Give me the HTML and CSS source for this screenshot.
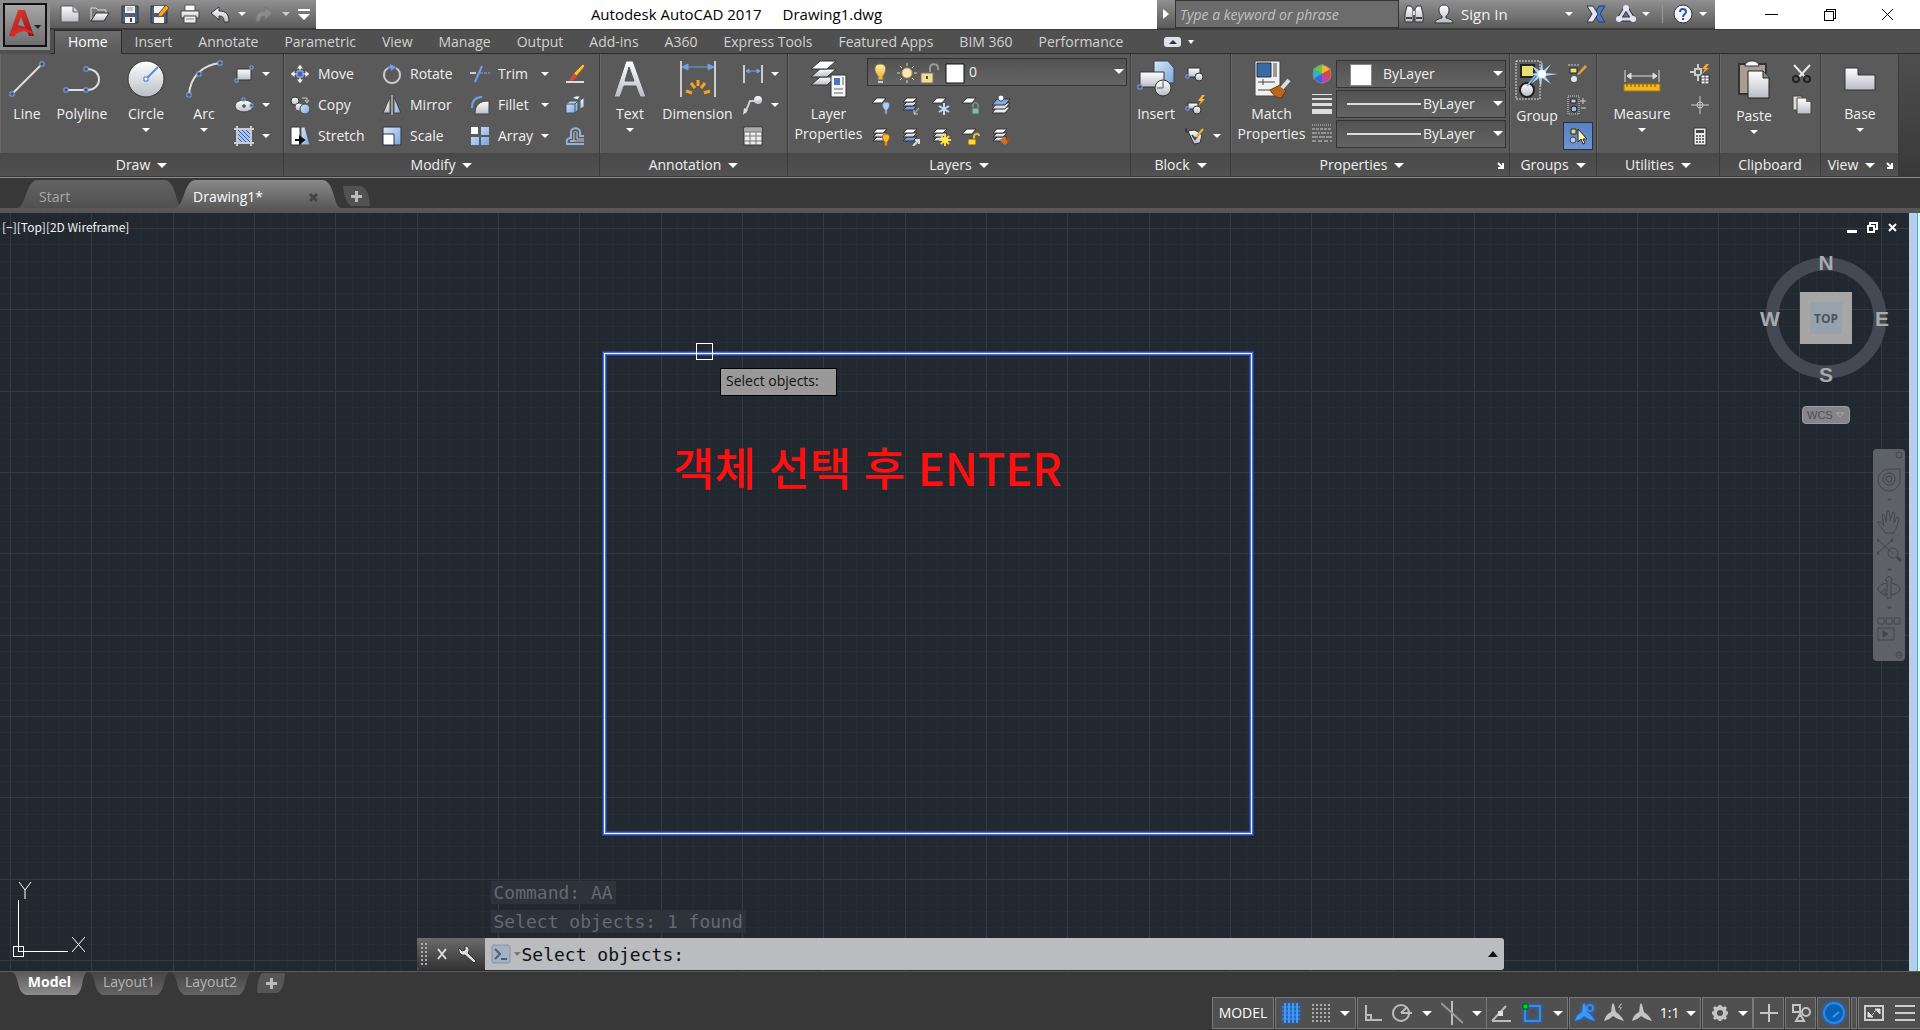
FILE: index.html
```html
<!DOCTYPE html>
<html lang="en">
<head>
<meta charset="utf-8">
<title>Autodesk AutoCAD 2017 - Drawing1.dwg</title>
<link rel="stylesheet" href="styles.css">
</head>
<body>
<svg class="defs" aria-hidden="true">
  <defs>
    <linearGradient id="gw" x1="0" y1="0" x2="0" y2="1"><stop offset="0" stop-color="#fff"/><stop offset="1" stop-color="#b9bdc6"/></linearGradient>
    <linearGradient id="gb" x1="0" y1="0" x2="1" y2="1"><stop offset="0" stop-color="#dbe9fb"/><stop offset="1" stop-color="#7aa3dc"/></linearGradient>
    <linearGradient id="gy" x1="0" y1="0" x2="0" y2="1"><stop offset="0" stop-color="#fff3a0"/><stop offset="1" stop-color="#e9a52c"/></linearGradient>
    <linearGradient id="gr" x1="0" y1="0" x2="1" y2="1"><stop offset="0" stop-color="#e8443c"/><stop offset="1" stop-color="#8e0d12"/></linearGradient>
    <symbol id="sheets" viewBox="0 0 20 20">
      <g stroke="#333" stroke-width="1"><path d="M6 11h10l-4 4H2z" fill="url(#gw)"/><path d="M6 7h10l-4 4H2z" fill="url(#gw)"/><path d="M6 3h10l-4 4H2z" fill="#fff"/></g>
    </symbol>
    <symbol id="sheetsblue" viewBox="0 0 20 20">
      <g stroke="#333" stroke-width="1"><path d="M6 11h10l-4 4H2z" fill="#6f9be8"/><path d="M6 7h10l-4 4H2z" fill="url(#gw)"/><path d="M6 3h10l-4 4H2z" fill="#fff"/></g>
    </symbol>
    <symbol id="sheet" viewBox="0 0 20 20"><path d="M6 3h9l-4 5H1z" fill="#fff" stroke="#333"/></symbol>
    <symbol id="person" viewBox="0 0 22 22"><path d="M10 1c2 2 2 7 3 9 3 2 6 5 8 9-4-1-8-3-11-5-2 2-5 4-9 5 1-4 3-7 7-9 1-2 0-7 2-9z" fill="currentColor"/></symbol>
  </defs>
</svg>

<header class="top">
  <button class="app" aria-label="Application menu"><svg width="34" height="34" viewBox="0 0 34 34"><path d="M10 1h7l9 26h-5l-2-5-9-3-3 8H1z" fill="url(#gr)"/><path d="M13 8l-3 8 7 2z" fill="#8c8c8c"/><path d="M2 24c7-6 14-7 23-1l-1 2c-8-5-14-3-19 3z" fill="#d92a27"/><path d="M26 16h7l-3 4z" fill="#222"/></svg></button>
  <div class="titlebar">
    <div class="qat">
      <button class="ib" aria-label="New"><svg viewBox="0 0 20 20"><path d="M1 2h12l6 6v10H1z" fill="url(#gw)" stroke="#555"/><path d="M13 2v6h6" fill="#ccc" stroke="#666"/></svg></button>
      <button class="ib" aria-label="Open"><svg viewBox="0 0 20 20"><path d="M1 16V4h5l2 2h8v3" fill="#777" stroke="#ddd"/><path d="M1 17l5-8h13l-5 8z" fill="url(#gw)" stroke="#333"/></svg></button>
      <button class="ib" aria-label="Save"><svg viewBox="0 0 20 20"><path d="M2 2h16v17H2z" fill="#4e5e76" stroke="#333"/><path d="M5 2h10v7H5zM5 13h10v6H5z" fill="#f2f2f2"/><path d="M7 4h6M7 6h6" stroke="#999"/><path d="M10 14h2v4h-2z" fill="#445"/></svg></button>
      <button class="ib" aria-label="Save as"><svg viewBox="0 0 20 20"><path d="M1 2h16v17H1z" fill="#4e5e76" stroke="#333"/><path d="M4 2h10v7H4zM4 13h10v6H4z" fill="#f2f2f2"/><path d="M8 13l1-4 7-8 3 3-7 8z" fill="#f3a72e" stroke="#8a4b12"/></svg></button>
      <button class="ib" aria-label="Plot"><svg viewBox="0 0 20 20"><path d="M5 1h10v6H5z" fill="#fff" stroke="#555"/><path d="M1 7h18v7H1z" fill="url(#gw)" stroke="#444"/><path d="M4 12h12v7H4z" fill="#eee" stroke="#444"/><path d="M6 15h8" stroke="#888"/></svg></button>
      <button class="ib" aria-label="Undo"><svg viewBox="0 0 20 20"><path d="M1 9l8-6v4c7 0 10 3 10 11h-5c0-4-1-6-5-6v4z" fill="url(#gw)" stroke="#333"/></svg></button>
      <span class="caret"></span>
      <button class="ib" aria-label="Redo"><svg viewBox="0 0 20 20"><path d="M18 9l-7-6v4c-7 0-9 3-9 10h4c0-4 1-5 5-5v4z" fill="#8b8b8b" stroke="#777"/></svg></button>
      <span class="caret dim"></span>
      <button class="ib slim" aria-label="Customize toolbar"><svg viewBox="0 0 12 20"><path d="M0 5h12v2H0zM0 10h12l-6 6z" fill="#fff"/></svg></button>
    </div>
    <h1 class="doc-title"><span>Autodesk AutoCAD 2017</span><span>Drawing1.dwg</span></h1>
    <div class="info">
      <button class="arrow" aria-label="Collapse search"><svg width="6" height="10" viewBox="0 0 6 10"><path d="M0 0l6 5-6 5z" fill="#fff"/></svg></button>
      <input class="search" type="text" aria-label="Search help" placeholder="Type a keyword or phrase">
      <button class="ib" aria-label="Search"><svg viewBox="0 0 20 20"><path d="M3 2h4l2 3v13H1v-8zM17 2h-4l-2 3v13h8v-8z" fill="url(#gw)" stroke="#333"/><path d="M9 7h2v4H9z" fill="#ddd"/><path d="M2 14h6M12 14h6" stroke="#444" stroke-width="2"/></svg></button>
      <button class="signin"><svg width="20" height="20" viewBox="0 0 20 20"><path d="M10 1c4 0 5 3 5 5 0 3-2 6-3 6v2c4 1 7 2 7 5H1c0-3 3-4 7-5v-2C7 12 5 9 5 6c0-2 1-5 5-5z" fill="url(#gw)" stroke="#333"/></svg><span>Sign In</span><span class="caret"></span></button>
      <button class="ib" aria-label="Exchange apps"><svg viewBox="0 0 20 20"><path d="M19 2h-6L8 10l5 8h6l-5-8z" fill="#4e74c9" stroke="#263a70"/><path d="M1 2h6l5 8-5 8H1l5-8z" fill="#dfe5f2" stroke="#333"/></svg></button>
      <button class="ib" aria-label="Stay connected"><svg viewBox="0 0 20 20"><path d="M10 4l7 11H3z" fill="none" stroke="#334" stroke-width="5" stroke-linejoin="round"/><path d="M10 4l7 11H3z" fill="none" stroke="#d5dbe8" stroke-width="3"/><g fill="#e4e9f3"><circle cx="10" cy="4" r="3"/><circle cx="3" cy="15" r="3"/><circle cx="17" cy="15" r="3"/></g></svg></button>
      <span class="caret"></span>
      <span class="vsep"></span>
      <button class="ib" aria-label="Help"><svg viewBox="0 0 20 20"><circle cx="10" cy="10" r="9" fill="#f4f4f4" stroke="#333"/><path d="M7 8c0-4 6-4 6 0 0 2-3 2-3 5M10 14v2" fill="none" stroke="#2555b5" stroke-width="2"/></svg></button>
      <span class="caret"></span>
    </div>
    <div class="win">
      <button aria-label="Minimize"><svg width="13" height="13" viewBox="0 0 13 13"><path d="M0 6h13v1H0z"/></svg></button>
      <button aria-label="Restore"><svg width="13" height="13" viewBox="0 0 13 13" fill="none" stroke="#000"><path d="M1 3h9v9H1zM3 3V1h9v9h-2" shape-rendering="crispEdges"/></svg></button>
      <button aria-label="Close"><svg width="13" height="13" viewBox="0 0 13 13" stroke="#000"><path d="M1 1l11 11M12 1L1 12"/></svg></button>
    </div>
  </div>
  <nav class="tabs">
    <a href="#" class="on">Home</a><a href="#">Insert</a><a href="#">Annotate</a><a href="#">Parametric</a><a href="#">View</a><a href="#">Manage</a><a href="#">Output</a><a href="#">Add-ins</a><a href="#">A360</a><a href="#">Express Tools</a><a href="#">Featured Apps</a><a href="#">BIM 360</a><a href="#">Performance</a>
    <button class="minrib" aria-label="Minimize ribbon"><svg width="30" height="10" viewBox="0 0 30 10"><rect width="17" height="10" rx="3" fill="#dfe2ea"/><path d="M5 7l4-4 4 4z" fill="#333"/><path d="M24 3h6l-3 4z" fill="#fff"/></svg></button>
  </nav>
</header>

<main class="ribbon">
  <section class="panel p-draw">
    <div class="body">
      <button class="big w54"><svg width="36" height="38" viewBox="0 0 36 38"><path d="M3 34L33 4" stroke="#ddd" stroke-width="2"/><g fill="#3b4f78" stroke="#7ea6e8"><path d="M1 32h4v4H1zM31 2h4v4h-4z"/></g></svg><span>Line</span></button>
      <button class="big w56"><svg width="38" height="38" viewBox="0 0 38 38"><path d="M3 30h21c16 0 16-21 0-21" fill="none" stroke="#ddd" stroke-width="2"/><g fill="#3b4f78" stroke="#7ea6e8"><path d="M1 28h4v4H1zM21 28h4v4h-4zM21 7h4v4h-4z"/></g></svg><span>Polyline</span></button>
      <button class="big w72"><svg width="38" height="38" viewBox="0 0 38 38"><circle cx="19" cy="19" r="18" fill="url(#gw)" stroke="#333"/><path d="M19 19L31 7" stroke="#5a8de0" stroke-width="2"/><path d="M17 17h4v4h-4z" fill="#fff" stroke="#3c6fd0"/></svg><span>Circle</span><i class="caret"></i></button>
      <button class="big w44"><svg width="38" height="38" viewBox="0 0 38 38"><path d="M4 35C5 17 17 5 35 3" fill="none" stroke="#ddd" stroke-width="2"/><g fill="#3b4f78" stroke="#7ea6e8"><path d="M2 33h4v4H2zM12 12h4v4h-4zM33 1h4v4h-4z"/></g></svg><span>Arc</span><i class="caret"></i></button>
      <div class="col pl8">
        <button class="tool" aria-label="Rectangle"><svg viewBox="0 0 20 20"><path d="M3 5h14v11H3z" fill="url(#gw)" stroke="#333"/><g fill="#3b4f78" stroke="#7ea6e8"><path d="M16 2h3v3h-3zM1 15h3v3H1z"/></g></svg><i class="caret"></i></button>
        <button class="tool" aria-label="Ellipse"><svg viewBox="0 0 20 20"><ellipse cx="10" cy="11" rx="9" ry="6" fill="url(#gw)" stroke="#444"/><path d="M10 9v4M8 11h4" stroke="#222"/><g fill="#3b4f78" stroke="#7ea6e8"><path d="M8 3h3v3H8zM16 9h3v3h-3z"/></g></svg><i class="caret"></i></button>
        <button class="tool" aria-label="Hatch"><svg viewBox="0 0 20 20"><path d="M4 4h12v12H4z" fill="#a9c2f0"/><path d="M4 8l8 8M4 12l4 4M4 4l12 12M8 4l8 8M12 4l4 4" stroke="#3a62b8" stroke-width="1"/><path d="M3 0v20M17 0v20M0 3h20M0 17h20" stroke="#ccc" stroke-width="2"/></svg><i class="caret"></i></button>
      </div>
    </div>
    <h2>Draw<i class="caret lg"></i></h2>
  </section>

  <section class="panel p-modify">
    <div class="body">
      <div class="col w92">
        <button class="tool"><svg viewBox="0 0 20 20"><path d="M10 0l4 5h-3v10h3l-4 5-4-5h3V5H6zM0 10l5-4v3h10V6l5 4-5 4v-3H5v3z" fill="#eee" stroke="#555" stroke-width="1"/><path d="M7 7h6v6H7z" fill="#3d66b8" stroke="#9bbcf0"/></svg>Move</button>
        <button class="tool"><svg viewBox="0 0 20 20"><circle cx="5" cy="6" r="4" fill="url(#gw)" stroke="#333"/><path d="M12 3h5v4M15 5l2 3 2-3" fill="none" stroke="#ccc"/><circle cx="9" cy="12" r="4" fill="url(#gw)" stroke="#555"/><circle cx="15" cy="14" r="5" fill="url(#gb)" stroke="#444"/></svg>Copy</button>
        <button class="tool"><svg viewBox="0 0 20 20"><path d="M1 1h9v18H1z" fill="#fff" stroke="#333"/><path d="M11 1h4l5 18h-9z" fill="url(#gb)" stroke="#555"/><path d="M5 14h8M10 11l4 3-4 3z" stroke="#111" stroke-width="2"/></svg>Stretch</button>
      </div>
      <div class="col w88">
        <button class="tool"><svg viewBox="0 0 20 20"><path d="M6 4a8 8 0 1 0 8 0" fill="none" stroke="#c9c9c9" stroke-width="2"/><path d="M6 4a8 8 0 0 1 6-1" fill="none" stroke="#6ea0ee" stroke-width="2"/><path d="M8 0l6 3-5 4z" fill="#6ea0ee"/></svg>Rotate</button>
        <button class="tool"><svg viewBox="0 0 20 20"><path d="M8 2v16H1z" fill="url(#gw)" stroke="#444"/><path d="M12 2v16h7z" fill="url(#gb)" stroke="#444"/><path d="M10 0v20" stroke="#ddd"/></svg>Mirror</button>
        <button class="tool"><svg viewBox="0 0 20 20"><path d="M1 1h18v18H1z" fill="url(#gb)" stroke="#334"/><path d="M1 8h11v11H1z" fill="#fff" stroke="#334"/></svg>Scale</button>
      </div>
      <div class="col w79">
        <button class="tool split"><svg viewBox="0 0 20 20"><path d="M0 9h6" stroke="#ccc" stroke-width="2"/><path d="M5 18l7-16" stroke="#6ea0ee" stroke-width="2"/><path d="M10 9h10" stroke="#7ea6e8" stroke-dasharray="3 1"/></svg>Trim<i class="caret"></i></button>
        <button class="tool split"><svg viewBox="0 0 20 20"><path d="M5 19C5 10 9 6 19 6v13z" fill="url(#gw)" stroke="#444"/><path d="M2 13C2 6 5 2 12 2" fill="none" stroke="#6ea0ee" stroke-width="2"/></svg>Fillet<i class="caret"></i></button>
        <button class="tool split"><svg viewBox="0 0 20 20"><path d="M1 1h7v7H1z" fill="#fff"/><path d="M11 1h8v8h-8zM1 11h8v8H1zM11 11h8v8h-8z" fill="url(#gb)"/></svg>Array<i class="caret"></i></button>
      </div>
      <div class="col pl16">
        <button class="tool" aria-label="Erase"><svg viewBox="0 0 20 20"><path d="M18 0l2 2-9 11-3-3z" fill="#f6bf45" stroke="#8a5a10"/><path d="M9 9l3 3-3 4c-2 1-4 1-5 0z" fill="#d4502a"/><path d="M1 18h18" stroke="#ddd" stroke-width="2"/></svg></button>
        <button class="tool" aria-label="Explode"><svg viewBox="0 0 20 20"><path d="M1 9l4-3h8v9l-3 3H1z" fill="url(#gb)" stroke="#456"/><path d="M1 9h9v9M10 9l3-3" fill="none" stroke="#456"/><path d="M7 3l4-2h4l-2 4zM15 5l4-2v9l-4 2z" fill="url(#gw)" stroke="#567"/></svg></button>
        <button class="tool" aria-label="Offset"><svg viewBox="0 0 20 20"><path d="M19 18H2c-1-4 0-6 4-6V6c0-5 9-5 9 0v4h4" fill="none" stroke="#8fb1ea" stroke-width="2"/><path d="M19 15H5h4V7c0-2 3-2 3 0v6h7" fill="none" stroke="#ccc"/></svg></button>
      </div>
    </div>
    <h2>Modify<i class="caret lg"></i></h2>
  </section>

  <section class="panel p-annotation">
    <div class="body">
      <button class="big w60"><svg width="34" height="38" viewBox="0 0 34 38"><path d="M13 1h7l13 36h-6l-4-11H11L7 37H1zM16 7l-4 14h9z" fill="url(#gw)" fill-rule="evenodd" stroke="#555"/></svg><span>Text</span><i class="caret"></i></button>
      <button class="big w75"><svg width="38" height="38" viewBox="0 0 38 38"><path d="M2 1v36M36 1v36" stroke="#ccc" stroke-width="2"/><path d="M4 7h30M9 4L3 7l6 3zM29 4l6 3-6 3z" fill="#6ea0ee" stroke="#6ea0ee"/><path d="M19 20v6M12 23l4 5M26 23l-4 5M7 31l6 2M31 31l-6 2" stroke="#f5a51d" stroke-width="3"/></svg><span>Dimension</span></button>
      <div class="col pl8">
        <button class="tool" aria-label="Linear dimension"><svg viewBox="0 0 20 20"><path d="M1 1v18M19 1v18" stroke="#ccc" stroke-width="2"/><path d="M3 7h14M6 5L3 7l3 2zM14 5l3 2-3 2z" fill="#6ea0ee" stroke="#6ea0ee"/></svg><i class="caret"></i></button>
        <button class="tool" aria-label="Leader"><svg viewBox="0 0 20 20"><path d="M2 18L7 6h6" fill="none" stroke="#ccc" stroke-width="2"/><path d="M0 20l1-7 4 2z" fill="#ddd"/><circle cx="15" cy="5" r="4" fill="url(#gw)"/></svg><i class="caret"></i></button>
        <button class="tool" aria-label="Table"><svg viewBox="0 0 20 20"><path d="M1 1h18v18H1z" fill="#eee" stroke="#333"/><path d="M1 2h18v4H1z" fill="#aaa"/><path d="M1 6h18M1 10h18M1 15h18M7 6v13M13 6v13" stroke="#777"/></svg></button>
      </div>
    </div>
    <h2>Annotation<i class="caret lg"></i></h2>
  </section>

  <section class="panel p-layers">
    <div class="body">
      <button class="big w81"><svg width="38" height="38" viewBox="0 0 38 38"><g stroke="#333"><path d="M10 17h16l-9 8H1z" fill="url(#gw)"/><path d="M10 9h16l-9 8H1z" fill="url(#gw)"/><path d="M10 1h16l-9 8H1z" fill="#fff"/><path d="M21 15h15v22H21z" fill="#f4f4f4"/></g><path d="M24 18h6v7h-6z" fill="#4a78bd"/><path d="M33 17v8M24 29h9M24 33h9" stroke="#666"/></svg><span>Layer<br>Properties</span></button>
      <div class="layergrid">
        <div class="combo layer">
          <svg width="98" height="22" viewBox="0 0 98 22" aria-hidden="true"><path d="M8 2c8 0 6 8 3 12v4H6v-4C2 10 1 2 8 2z" fill="url(#gy)" stroke="#775"/><path d="M6 19h5v2H6z" fill="#ccc"/><circle cx="35" cy="11" r="5" fill="#fbe7a8" stroke="#b99"/><path d="M35 1v3M35 18v3M25 11h3M42 11h3M28 4l2 2M42 4l-2 2M28 18l2-2M42 18l-2-2" stroke="#e9d9a0"/><path d="M58 10V6c0-5 8-5 8 0v2" fill="none" stroke="#999" stroke-width="2"/><path d="M49 11h12v10H49z" fill="#f3dd92" stroke="#776"/><path d="M55 14v3" stroke="#554" stroke-width="2"/><path d="M74 2h18v19H74z" fill="#fff" stroke="#111"/></svg>
          <select aria-label="Layer"><option>0</option></select>
        </div>
        <div class="icons">
          <button class="ib" aria-label="Layer off"><svg viewBox="0 0 20 20"><use href="#sheet"/><path d="M15 7c6 0 3 7 1 8v4h-2v-4c-2-1-5-8 1-8z" fill="#a9cdf5" stroke="#678"/></svg></button>
          <button class="ib" aria-label="Layer isolate"><svg viewBox="0 0 20 20"><use href="#sheetsblue"/><path d="M18 13l-5 6v-4M13 19h4" fill="none" stroke="#ccc" stroke-width="1"/></svg></button>
          <button class="ib" aria-label="Layer freeze"><svg viewBox="0 0 20 20"><use href="#sheet"/><path d="M13 8v12M8 11l10 6M8 17l10-6" stroke="#bcdcff" stroke-width="2"/></svg></button>
          <button class="ib" aria-label="Layer lock"><svg viewBox="0 0 20 20"><use href="#sheet"/><path d="M12 13v-3c0-3 5-3 5 0v3" fill="none" stroke="#9bb"/><path d="M11 13h7v6h-7z" fill="#8fb5aa" stroke="#465"/></svg></button>
          <button class="ib" aria-label="Make current"><svg viewBox="0 0 20 20"><path d="M6 12h13l-5 6H1z" fill="#eee" stroke="#333"/><path d="M6 8h13l-5 6H1z" fill="#ddd" stroke="#333"/><path d="M6 4h13l-5 6H1z" fill="#7daae8" stroke="#333"/><circle cx="10" cy="3" r="3" fill="#fff" stroke="#555"/></svg></button>
          <button class="ib" aria-label="Turn all layers on"><svg viewBox="0 0 20 20"><use href="#sheets"/><path d="M15 8c6 0 3 7 1 8v4h-2v-4c-2-1-5-8 1-8z" fill="#f9b637" stroke="#a60"/></svg></button>
          <button class="ib" aria-label="Layer unisolate"><svg viewBox="0 0 20 20"><use href="#sheetsblue"/><path d="M12 20l6-6M14 14h4v4" fill="none" stroke="#ddd" stroke-width="2"/></svg></button>
          <button class="ib" aria-label="Thaw all layers"><svg viewBox="0 0 20 20"><use href="#sheets"/><path d="M14 8v12M8 14h12M10 10l8 8M10 18l8-8" stroke="#ffd93b" stroke-width="2"/><circle cx="14" cy="14" r="3" fill="#ffe75c"/></svg></button>
          <button class="ib" aria-label="Unlock layer"><svg viewBox="0 0 20 20"><use href="#sheet"/><path d="M13 13v-2c0-4 5-4 5-1" fill="none" stroke="#e9c62c" stroke-width="2"/><path d="M7 13h8v6H7z" fill="#ffd93b" stroke="#653"/></svg></button>
          <button class="ib" aria-label="Match layer"><svg viewBox="0 0 20 20"><use href="#sheets"/><path d="M8 14l6-3 4 4-4 4z" fill="#c9702a"/><path d="M15 12l4 4M19 11l-3 4" stroke="#a54d14" stroke-width="2"/></svg></button>
        </div>
      </div>
    </div>
    <h2>Layers<i class="caret lg"></i></h2>
  </section>

  <section class="panel p-block">
    <div class="body">
      <button class="big w50"><svg width="38" height="38" viewBox="0 0 38 38"><path d="M17 1h14l6 7v15H17z" fill="url(#gb)" stroke="#345"/><path d="M3 12h24v15H3z" fill="url(#gw)" stroke="#333"/><circle cx="26" cy="28" r="8" fill="url(#gw)" stroke="#333"/><path d="M26 21v7h-6" fill="none" stroke="#555"/><path d="M1 25h4v4H1z" fill="#3b4f78" stroke="#7ea6e8"/></svg><span>Insert</span></button>
      <div class="col pl4">
        <button class="tool" aria-label="Create block"><svg viewBox="0 0 20 20"><path d="M3 4h12v9H3z" fill="url(#gw)" stroke="#333"/><circle cx="14" cy="13" r="4" fill="url(#gw)" stroke="#333"/><path d="M1 11h3v3H1z" fill="#3b4f78" stroke="#7ea6e8"/></svg></button>
        <button class="tool" aria-label="Block editor"><svg viewBox="0 0 20 20"><path d="M3 8h10v6H3z" fill="url(#gw)" stroke="#333"/><circle cx="12" cy="15" r="4" fill="url(#gw)" stroke="#333"/><path d="M1 12h3v3H1z" fill="#3b4f78" stroke="#7ea6e8"/><path d="M17 0l-4 6h3l-3 5 7-7h-3l3-4z" fill="#ffb52e"/></svg></button>
        <button class="tool" aria-label="Edit attributes"><svg viewBox="0 0 20 20"><path d="M1 2v4h3" fill="none" stroke="#222"/><path d="M3 5l7-1 7 5-2 8-6 1z" fill="url(#gw)" stroke="#333"/><path d="M7 9l3 4 7-9" fill="none" stroke="#444" stroke-width="2"/><path d="M11 11l7-8" stroke="#f1b53b" stroke-width="2"/></svg><i class="caret"></i></button>
      </div>
    </div>
    <h2>Block<i class="caret lg"></i></h2>
  </section>

  <section class="panel p-properties">
    <div class="body">
      <button class="big w81"><svg width="38" height="38" viewBox="0 0 38 38"><path d="M2 1h25v35H2z" fill="#f1f1f1" stroke="#444"/><path d="M4 3h14v14H4z" fill="#356ba6" stroke="#234"/><path d="M20 3h4v14h-4z" fill="#999"/><path d="M5 22h17M10 19v6M5 30h12" stroke="#444"/><path d="M17 30l10-5 6 6-5 7c-5 0-8-3-11-8z" fill="#b9671f" stroke="#6a3608"/><path d="M29 28l7-8" stroke="#ddd" stroke-width="4"/></svg><span>Match<br>Properties</span></button>
      <div class="props">
        <label for="pc"><svg width="20" height="20" viewBox="0 0 20 20"><path d="M10 10V0l9 5z" fill="#f3b231"/><path d="M10 10l9-5v10z" fill="#e6442f"/><path d="M10 10l9 5-9 5z" fill="#c23fb8"/><path d="M10 10v10l-9-5z" fill="#3e62e0"/><path d="M10 10L1 15V5z" fill="#29b6c8"/><path d="M10 10L1 5l9-5z" fill="#62c940"/><circle cx="10" cy="10" r="9" fill="none" stroke="#888"/></svg></label>
        <div class="combo color"><select id="pc" aria-label="Object color"><option>ByLayer</option></select></div>
        <label for="pw"><svg width="20" height="20" viewBox="0 0 20 20" fill="#ddd"><path d="M0 0h20v1H0zM0 4h20v2H0zM0 9h20v3H0zM0 15h20v5H0z"/></svg></label>
        <div class="combo lw"><select id="pw" aria-label="Lineweight"><option>ByLayer</option></select></div>
        <label for="pl"><svg width="20" height="20" viewBox="0 0 20 20" stroke="#ccc"><path d="M0 1h20" stroke-dasharray="1 1"/><path d="M0 5h20" stroke-dasharray="3 1"/><path d="M0 9h20" stroke-dasharray="5 1 2 1"/><path d="M0 13h20" stroke-dasharray="6 1"/><path d="M0 17h20" stroke-dasharray="4 2"/></svg></label>
        <div class="combo lt"><select id="pl" aria-label="Linetype"><option>ByLayer</option></select></div>
      </div>
    </div>
    <h2>Properties<i class="caret lg"></i><button class="launch" aria-label="Properties dialog"><svg width="7" height="7" viewBox="0 0 7 7"><path d="M1 1l4 4M6 1v5H1" fill="none" stroke="#fff" stroke-width="2"/></svg></button></h2>
  </section>

  <section class="panel p-groups">
    <div class="body">
      <button class="big w54"><svg width="44" height="40" viewBox="0 0 44 40"><path d="M1 1h24v38H1z" fill="none" stroke="#ddd" stroke-dasharray="2 1"/><path d="M6 5h13v12H6z" fill="#e8e06c" stroke="#222" stroke-width="2"/><circle cx="12" cy="30" r="7" fill="url(#gw)" stroke="#222" stroke-width="2"/><path d="M12 26l8-10" stroke="#7fb6ea" stroke-width="2"/><path d="M27 0l1 11 8-7-6 9 13 1-13 2 6 8-9-6-1 10-2-10-8 6 6-8-10-2 10-1-6-8 9 6z" fill="#a9d4fb"/><circle cx="27" cy="14" r="4" fill="#fff"/></svg><span>Group</span></button>
      <div class="col">
        <button class="tool" aria-label="Group edit"><svg viewBox="0 0 20 20"><path d="M1 1h12" stroke="#ccc" stroke-dasharray="2 1"/><path d="M3 4h7v5H3z" fill="#e8e06c" stroke="#222"/><circle cx="7" cy="15" r="3" fill="#dfe9f5"/><path d="M10 10l8-9 2 2-8 8z" fill="#d9a53a"/></svg></button>
        <button class="tool" aria-label="Ungroup"><svg viewBox="0 0 20 20"><path d="M1 1h11v18H1z" fill="none" stroke="#ccc" stroke-dasharray="1 1"/><path d="M4 4h5v4H4z" fill="#ccd" stroke="#223"/><circle cx="7" cy="14" r="3" fill="#9bc" stroke="#124"/><path d="M13 6h6M16 3v6M14 13h5" stroke="#ccc"/></svg></button>
        <button class="tool active" aria-label="Group selection"><svg viewBox="0 0 20 20"><path d="M3 3h5v5H3z" fill="#e8e06c" stroke="#223"/><circle cx="5" cy="14" r="3" fill="#bcd" stroke="#445"/><path d="M10 3v13l3-3 2 5 2-1-2-4h4z" fill="#fff7b0" stroke="#222"/></svg></button>
      </div>
    </div>
    <h2>Groups<i class="caret lg"></i></h2>
  </section>

  <section class="panel p-utilities">
    <div class="body">
      <button class="big w90"><svg width="38" height="38" viewBox="0 0 38 38"><path d="M2 10v12M36 10v12M4 16h30M8 13l-4 3 4 3zM30 13l4 3-4 3z" fill="#ddd" stroke="#ddd"/><path d="M1 24h36v7H1z" fill="#f1b722" stroke="#a77608"/><path d="M4 24v3M8 24v3M12 24v3M16 24v3M20 24v3M24 24v3M28 24v3M32 24v3" stroke="#7a5400"/></svg><span>Measure</span><i class="caret"></i></button>
      <div class="col">
        <button class="tool" aria-label="Quick select"><svg viewBox="0 0 20 20"><path d="M8 0v5M8 11v6M0 8h5M5 5h6v6H5z" fill="none" stroke="#ccc" stroke-width="2"/><path d="M16 0l-4 5h3l-3 5 7-6h-3l3-4z" fill="#ffa62b"/><path d="M11 11h8v9h-8z" fill="#fff" stroke="#333"/><path d="M11 14h8M11 17h8M15 11v9" stroke="#555"/></svg></button>
        <button class="tool" aria-label="Point style"><svg viewBox="0 0 20 20"><path d="M10 1v18M1 10h18" stroke="#ccc"/><circle cx="10" cy="10" r="3" fill="none" stroke="#ccc" stroke-width="1"/></svg></button>
        <button class="tool" aria-label="Calculator"><svg viewBox="0 0 20 20"><path d="M4 2h12v17H4z" fill="#eee" stroke="#333"/><path d="M6 4h8v3H6z" fill="#444"/><path d="M6 10h8M6 13h8M6 16h8" stroke="#666" stroke-width="2" stroke-dasharray="2 1"/></svg></button>
      </div>
    </div>
    <h2>Utilities<i class="caret lg"></i></h2>
  </section>

  <section class="panel p-clipboard">
    <div class="body">
      <button class="big w68"><svg width="34" height="40" viewBox="0 0 34 40"><path d="M2 4h27v30H2z" fill="#a99c90" stroke="#333" stroke-width="2"/><path d="M8 6c0-3 3-5 7-5s7 2 7 5z" fill="#fff" stroke="#333"/><path d="M11 11h15l6 7v20H11z" fill="url(#gw)" stroke="#222"/><path d="M26 11v7h6" fill="#888" stroke="#222"/></svg><span>Paste</span><i class="caret"></i></button>
      <div class="col pl4">
        <button class="tool" aria-label="Cut"><svg viewBox="0 0 20 20"><path d="M2 1l11 12M18 1L7 13" stroke="#e8e8e8" stroke-width="2"/><circle cx="4" cy="15" r="3" fill="none" stroke="#222" stroke-width="2"/><circle cx="15" cy="15" r="3" fill="none" stroke="#222" stroke-width="2"/></svg></button>
        <button class="tool" aria-label="Copy clip"><svg viewBox="0 0 20 20"><path d="M1 1h9v14H1z" fill="#ddd" stroke="#444"/><path d="M5 3h9l5 4v12H5z" fill="url(#gw)" stroke="#444"/><path d="M14 3v4h5" fill="#666"/></svg></button>
      </div>
    </div>
    <h2>Clipboard</h2>
  </section>

  <section class="panel p-view">
    <div class="body">
      <button class="big w78"><svg width="34" height="38" viewBox="0 0 34 38"><path d="M2 8h13v7h17v15H2z" fill="url(#gw)" stroke="#333"/></svg><span>Base</span><i class="caret"></i></button>
    </div>
    <h2>View<i class="caret lg"></i><button class="launch" aria-label="View dialog"><svg width="7" height="7" viewBox="0 0 7 7"><path d="M1 1l4 4M6 1v5H1" fill="none" stroke="#fff" stroke-width="2"/></svg></button></h2>
  </section>
</main>

<nav class="files">
  <a href="#" class="ftab">Start</a>
  <a href="#" class="ftab on"><span>Drawing1*</span><svg width="9" height="9" viewBox="0 0 9 9" stroke="#444" stroke-width="3"><path d="M1 1l7 7M8 1L1 8"/></svg></a>
  <button class="fadd" aria-label="New tab"><svg width="11" height="11" viewBox="0 0 11 11"><path d="M4 0h3v4h4v3H7v4H4V7H0V4h4z" fill="#bbb"/></svg></button>
</nav>

<section class="canvas">
  <svg class="paper" width="100%" height="100%" aria-hidden="true">
    <defs>
      <pattern id="grid" x="10" y="15" width="244" height="244" patternUnits="userSpaceOnUse" shape-rendering="crispEdges">
        <path d="M16 0v244M33 0v244M49 0v244M65 0v244M98 0v244M114 0v244M130 0v244M146 0v244M179 0v244M195 0v244M211 0v244M228 0v244M0 16h244M0 33h244M0 49h244M0 65h244M0 98h244M0 114h244M0 130h244M0 146h244M0 179h244M0 195h244M0 211h244M0 228h244" stroke="#252d35" fill="none"/>
        <path d="M0 0h1v244H0zM81 0h1v244h-1zM163 0h1v244h-1zM0 0h244v1H0zM0 81h244v1H0zM0 163h244v1H0z" fill="#323b43"/>
      </pattern>
    </defs>
    <rect width="100%" height="100%" fill="url(#grid)"/>
    <g fill="none" shape-rendering="crispEdges">
      <rect x="604" y="140" width="647" height="480" stroke="#26408a" stroke-width="5"/>
      <rect x="604" y="140" width="647" height="480" stroke="#4a70d4" stroke-width="3"/>
      <rect x="604" y="140" width="647" height="480" stroke="#eef4ff" stroke-width="1"/>
      <path d="M696 130h16v16h-16z" stroke="#fff"/>
    </g>
  </svg>
  <p class="vp">[−][Top][2D Wireframe]</p>
  <p class="tip">Select objects:</p>
  <p class="note" lang="ko">객체 선택 후 ENTER</p>
  <svg class="ucs" width="80" height="90" viewBox="0 0 80 90" fill="none" stroke="#fff"><path d="M6 21v51M6 72h50M1 67h10v10H1z" shape-rendering="crispEdges"/><path d="M7 3l6 8 6-8M13 11v9M60 58l13 15M73 58L60 73"/></svg>
  <div class="vpwin">
    <button aria-label="Minimize view"><svg width="11" height="11" viewBox="0 0 11 11"><path d="M0 8h10v3H0z" fill="#fff"/></svg></button>
    <button aria-label="Restore view"><svg width="11" height="11" viewBox="0 0 11 11"><path d="M1 4h6v6H1zM3 3V1h7v6H8" fill="none" stroke="#fff" stroke-width="2"/></svg></button>
    <button aria-label="Close view"><svg width="11" height="11" viewBox="0 0 11 11"><path d="M2 2l7 7M9 2L2 9" stroke="#fff" stroke-width="2"/></svg></button>
  </div>
  <div class="cube">
    <svg width="132" height="140" viewBox="0 0 132 140"><circle cx="66" cy="69" r="54" fill="none" stroke="#434a53" stroke-width="13"/><path d="M40 43h52v52H40z" fill="#a6a6a6"/><path d="M50 53h32v32H50z" fill="#98a2ad"/><g font-family="Liberation Sans, Arial, sans-serif" font-weight="bold" font-size="21" text-anchor="middle" fill="#a8abae"><text x="66" y="21">N</text><text x="66" y="133">S</text><text x="10" y="77">W</text><text x="122" y="77">E</text></g><text x="66" y="74" font-family="Open Sans, sans-serif" font-weight="bold" font-size="12" text-anchor="middle" fill="#4b535d">TOP</text></svg>
    <button class="wcs">WCS<svg width="10" height="6" viewBox="0 0 10 6"><path d="M1 1h8L5 5z" fill="none" stroke="#a3a5a9"/></svg></button>
  </div>
  <div class="navbar">
    <svg width="32" height="212" viewBox="0 0 32 212" fill="none" stroke="#43474d"><circle cx="26" cy="6" r="3"/><path d="M16 20h11v10a11 11 0 1 1-11-10z"/><circle cx="16" cy="30" r="6"/><circle cx="16" cy="30" r="3"/><path d="M15 50h3v1h-3zM15 120h3v1h-3zM15 158h3v1h-3z"/><path d="M12 84c-2-6-8-8-7-11 3-1 4 2 6 4L9 66c2-2 3 1 4 7l1-11c2-1 3 0 3 10l3-9c2 0 2 1 1 11l3-6c3 0 2 2 0 9-1 5-3 4-3 7z"/><path d="M5 91l16 14M19 91L5 104"/><circle cx="20" cy="104" r="5"/><path d="M24 108l4 4" stroke-width="3"/><path d="M4 91h2M18 91h2M4 104h2" stroke-width="3"/><ellipse cx="16" cy="140" rx="11" ry="6"/><path d="M14 149v-18h-2l4-4 4 4h-2v18zM8 143l4-3v7z" fill="#5e6268"/><path d="M5 169h6v6H5zM13 169h6v6h-6zM21 169h6v6h-6zM5 179h16v12H5z"/><path d="M10 182l5 3-5 3z" fill="#43474d"/><circle cx="26" cy="206" r="3"/><path d="M24 206h4"/></svg>
  </div>
  <div class="edge"></div>
  <div class="cmd">
    <p class="hist">Command: AA</p>
    <p class="hist">Select objects: 1 found</p>
    <div class="cmdbar">
      <div class="grip">
        <svg width="6" height="22" viewBox="0 0 6 22"><path d="M1 0v22M5 0v22" stroke="#aaa" stroke-width="2" stroke-dasharray="2 2"/></svg>
        <button aria-label="Close command line"><svg width="12" height="12" viewBox="0 0 12 12"><path d="M2 1l8 10M10 1L2 11" stroke="#ddd" stroke-width="2"/></svg></button>
        <button aria-label="Customize command line"><svg width="20" height="20" viewBox="0 0 20 20"><path d="M2 4l3 3 3-1V2C12 2 13 6 11 9l8 8-2 2-9-8C4 12 1 8 2 4z" fill="#ddd" stroke="#333"/></svg></button>
      </div>
      <svg class="prompt" width="30" height="20" viewBox="0 0 30 20"><rect x="1" y="1" width="18" height="18" rx="2" fill="#a3b1c2" stroke="#8794a5"/><path d="M4 5l5 5-5 5M10 15h6" fill="none" stroke="#4f5f73" stroke-width="2"/><path d="M23 8h7l-4 4z" fill="#777"/></svg>
      <input type="text" aria-label="Command line" value="Select objects:">
      <button class="up" aria-label="Command history"><svg width="10" height="6" viewBox="0 0 10 6"><path d="M0 6l5-6 5 6z" fill="#111"/></svg></button>
    </div>
  </div>
</section>

<footer>
  <nav class="layouts">
    <a href="#" class="ltab on">Model</a><a href="#" class="ltab">Layout1</a><a href="#" class="ltab">Layout2</a>
    <button class="ladd" aria-label="New layout"><svg width="11" height="11" viewBox="0 0 11 11"><path d="M4 0h3v4h4v3H7v4H4V7H0V4h4z" fill="#bbb"/></svg></button>
  </nav>
  <div class="status">
    <button class="cell model">MODEL</button>
    <div class="cell c2">
      <button aria-label="Grid"><svg class="glow" width="20" height="22" viewBox="0 0 20 22"><path d="M4 1v20M8 1v20M12 1v20M16 1v20" stroke="#3d98ff" stroke-width="2"/><path d="M1 5h18M1 9h18M1 13h18M1 17h18" stroke="#3d98ff" stroke-width="1"/></svg></button>
      <button aria-label="Snap"><svg width="20" height="20" viewBox="0 0 20 20"><path d="M1 2h18M1 6h18M1 10h18M1 14h18M1 18h18" stroke="#aaa" stroke-width="2" stroke-dasharray="2 2"/></svg></button>
      <i class="caret st"></i>
    </div>
    <div class="cell c3">
      <button aria-label="Ortho"><svg width="20" height="20" viewBox="0 0 20 20"><path d="M3 2v15h16M3 12h5v5" fill="none" stroke="#bbb" stroke-width="2"/></svg></button>
      <button aria-label="Polar"><svg width="20" height="20" viewBox="0 0 20 20"><circle cx="9" cy="10" r="8" fill="none" stroke="#bbb" stroke-width="2"/><path d="M9 10h11M9 10l6-6" stroke="#bbb" stroke-width="2"/></svg></button>
      <i class="caret st"></i>
      <button aria-label="Isodraft"><svg width="22" height="24" viewBox="0 0 22 24"><path d="M11 0v24" stroke="#bbb" stroke-width="2"/><path d="M0 2l22 20" stroke="#999" stroke-width="2"/></svg></button>
      <i class="caret st"></i>
    </div>
    <div class="cell c4">
      <button aria-label="Object tracking"><svg width="20" height="20" viewBox="0 0 20 20"><path d="M1 18h19M1 18L15 3" stroke="#bbb" stroke-width="2"/><path d="M7 8h5v5H7z" fill="#ddd"/></svg></button>
      <button aria-label="Object snap"><svg class="glow" width="22" height="22" viewBox="0 0 22 22"><path d="M4 4h15v15H4z" fill="none" stroke="#2f8df5" stroke-width="2"/><path d="M2 2h5v5H2z" fill="#0d0" stroke="#050"/></svg></button>
      <i class="caret st"></i>
    </div>
    <div class="cell c5">
      <button class="blue" aria-label="Annotation visibility"><svg class="glow" width="22" height="22"><use href="#person"/><circle cx="16" cy="6" r="3" fill="#505050" stroke="#2f8df5" stroke-width="2"/></svg></button>
      <button aria-label="Auto scale"><svg width="22" height="22"><use href="#person"/><path d="M18 1l-4 5h3l-2 5 5-6h-3l3-4z" fill="#ccc" stroke="#505050" stroke-width="1"/></svg></button>
      <button aria-label="Annotation"><svg width="22" height="22"><use href="#person"/></svg></button>
      <button class="scale">1:1</button>
      <i class="caret st"></i>
    </div>
    <div class="cell c6">
      <button aria-label="Workspace"><svg width="18" height="18" viewBox="0 0 18 18"><circle cx="9" cy="9" r="5" fill="none" stroke="#c4c4c4" stroke-width="4"/><path d="M9 1v3M9 14v3M1 9h3M14 9h3M3 3l3 3M12 12l3 3M15 3l-3 3M6 12l-3 3" stroke="#c4c4c4" stroke-width="3"/></svg></button>
      <i class="caret st"></i>
    </div>
    <div class="cell c7"><button aria-label="Annotation monitor"><svg width="18" height="18" viewBox="0 0 18 18"><path d="M9 0v18M0 9h18" stroke="#c4c4c4" stroke-width="2"/></svg></button></div>
    <div class="cell c8"><button aria-label="Isolate objects"><svg width="20" height="20" viewBox="0 0 20 20"><g fill="none" stroke="#c4c4c4" stroke-width="2"><path d="M2 2h7v7H2zM9 11l4 7H5z"/><circle cx="15" cy="9" r="4"/></g></svg></button></div>
    <div class="cell c9"><button aria-label="Hardware acceleration"><svg class="glow" width="22" height="22" viewBox="0 0 22 22"><circle cx="11" cy="11" r="10" fill="#0863b5" stroke="#2588f5" stroke-width="2"/><path d="M10 15l6-5" stroke="#2f9bff" stroke-width="2"/></svg></button></div>
    <div class="cell c10"></div>
    <div class="cell c11">
      <button aria-label="Clean screen"><svg width="20" height="16" viewBox="0 0 20 16"><path d="M1 1h18v14H1z" fill="none" stroke="#ccc" stroke-width="2"/><path d="M11 4h5v5zM4 7v5h5z" fill="#ddd" stroke="#ddd"/><path d="M10 7l4-3M6 12l4-4" stroke="#ddd"/></svg></button>
      <button aria-label="Customization"><svg width="20" height="16" viewBox="0 0 20 16"><path d="M0 1h20M0 8h20M0 15h20" stroke="#ccc" stroke-width="2"/></svg></button>
    </div>
  </div>
</footer>
</body>
</html>
```
FILE: styles.css
```css
* { box-sizing: border-box; }
body {
  margin: 0;
  min-height: 100vh;
  display: flex;
  flex-direction: column;
  background: #383838;
  color: #f0f0f0;
  font: 14px/20px "Open Sans", "Noto Sans CJK KR", sans-serif;
  overflow-x: hidden;
}
button { font: inherit; color: inherit; background: none; border: 0; padding: 0; margin: 0; }
a { color: inherit; text-decoration: none; }
h1, h2, p { margin: 0; font-weight: 400; font-size: 14px; }
svg { display: block; flex: none; }
.defs { position: absolute; width: 0; height: 0; }

.caret { flex: none; width: 0; height: 0; border: 4px solid transparent; border-top-color: #fff; border-bottom: 0; }
.caret.lg { border-width: 5px; border-top-color: #fff; border-bottom: 0; }
.caret.st { border-width: 5px; border-top-color: #fff; border-bottom: 0; }
.caret.dim { border-top-color: #ccc; }

/* title bar and ribbon tabs */
.top {
  display: grid;
  grid-template-columns: 50px minmax(0, 1fr);
  grid-template-rows: 29px 25px;
  background: #505050;
}
.app {
  grid-row: 1 / 3;
  height: 50px;
  padding: 5px 4px;
  border: 4px solid #8c8c8c;
  outline: 2px solid #111;
  outline-offset: -5px;
  background: linear-gradient(#a8a8a8, #6d6d6d);
}
.titlebar { display: flex; background: #fff; }
.qat, .info { display: flex; align-items: center; background: linear-gradient(#909090, #5b5b5b); border-bottom: 1px solid #3a3a3a; }
.qat { width: 266px; padding-left: 10px; gap: 10px; }
.qat .caret { margin: 0 -2px; }
.ib { width: 20px; height: 20px; flex: none; }
.ib svg { width: 20px; height: 20px; }
.ib.slim { width: 12px; }
.ib.slim svg { width: 12px; }
.doc-title { flex: 1; display: flex; justify-content: center; gap: 21px; color: #000; font-size: 15px; line-height: 28px; white-space: nowrap; }
.info { width: 558px; gap: 10px; }
.arrow { width: 18px; height: 28px; display: grid; place-items: center; }
.search {
  width: 224px; height: 28px; margin: 0 -5px 0 -10px; padding: 0 4px;
  border: 1px solid #333; background: #6c6c6c; color: #ddd;
  font: italic 14px "Open Sans", sans-serif;
}
.search::placeholder { color: #c0c0c0; opacity: 1; }
.signin { display: flex; align-items: center; gap: 7px; width: 142px; padding-right: 3px; font-size: 15px; }
.signin .caret { margin-left: auto; }
.info > .caret { margin-left: -4px; }
.vsep { width: 1px; height: 18px; background: #999; margin-left: 2px; }
.win { width: 205px; display: flex; justify-content: space-around; padding: 0 3px 0 27px; }
.win button { width: 46px; display: grid; place-items: center; }
.tabs { display: flex; padding-left: 4px; border-bottom: 1px solid #2c2c2c; border-top: 1px solid #3c3c3c; color: #d2d2d2; }
.tabs a { padding: 0 13px; white-space: nowrap; line-height: 24px; }
.tabs a.on { height: 24px; background: linear-gradient(#6c6c6c, #5a5a5a); border: 1px solid #2c2c2c; border-bottom: 0; color: #fff; line-height: 22px; }
.minrib { margin-left: 28px; }

/* ribbon */
.ribbon { display: flex; height: 124px; background: linear-gradient(#4e4e4e, #393939); border-bottom: 1px solid #8a8a8a; }
.panel { flex: none; display: flex; flex-direction: column; border-right: 1px solid #3b3b3b; box-shadow: inset 1px 0 #696969; margin-bottom: 1px; background: #5a5a5a; }
.panel .body { flex: 1; display: flex; padding-top: 4px; }
.panel h2 { position: relative; display: flex; justify-content: center; align-items: center; gap: 7px; height: 23px; padding-top: 1px; background: linear-gradient(#484848, #525252); }
.p-draw { width: 284px; }
.p-modify { width: 316px; }
.p-modify .body { padding-left: 6px; }
.p-annotation { width: 188px; }
.p-layers { width: 343px; }
.p-block { width: 100px; }
.p-properties { width: 279px; }
.p-groups { width: 87px; }
.p-utilities { width: 123px; }
.p-clipboard { width: 101px; }
.p-view { width: 78px; }
.big { flex: none; height: 94px; display: flex; flex-direction: column; align-items: center; justify-content: flex-start; padding-top: 2px; }
.big svg { margin-bottom: 6px; }
.big span { line-height: 20px; }
.big .caret { margin-top: 4px; }
.w44 { width: 44px; } .w50 { width: 50px; } .w54 { width: 54px; } .w56 { width: 56px; }
.w60 { width: 60px; } .w68 { width: 68px; } .w72 { width: 72px; } .w75 { width: 75px; }
.w78 { width: 78px; } .w79 { width: 79px; } .w81 { width: 81px; } .w88 { width: 88px; } .w90 { width: 90px; } .w92 { width: 92px; }
.pl4 { padding-left: 4px; } .pl8 { padding-left: 8px; } .pl16 { padding-left: 16px; }
.col { flex: none; display: grid; grid-template-rows: repeat(3, 31px); align-content: start; }
.tool { display: flex; align-items: center; gap: 8px; }
.tool svg { width: 20px; height: 20px; }
.tool.split .caret { margin-left: auto; }
.tool.active { height: 28px; padding: 0 4px; align-self: center; background: linear-gradient(#5a80bd, #6f95d0); border: 1px solid #1f3358; }
.p-groups .tool:not(.active) { padding-left: 4px; }
.p-groups .col { margin-left: -1px; }
.p-utilities .col { padding-left: 3px; }

.combo { position: relative; height: 28px; }
.combo select {
  appearance: none; width: 100%; height: 100%; border: 1px solid #333; border-radius: 0;
  background: linear-gradient(#525252, #646464); color: #f0f0f0; font: inherit;
}
.combo::after { content: ""; position: absolute; right: 3px; top: 11px; border: 5px solid transparent; border-top-color: #fff; border-bottom: 0; pointer-events: none; }
.layergrid { display: grid; grid-template-rows: 31px 62px; width: 260px; margin-left: -2px; }
.combo.layer svg { position: absolute; left: 5px; top: 4px; pointer-events: none; }
.combo.layer select { padding-left: 101px; }
.icons { display: grid; grid-template-columns: repeat(5, 30px); grid-template-rows: 31px 31px; align-items: center; padding-left: 4px; }
.props { display: grid; grid-template-columns: 24px 170px; grid-template-rows: repeat(3, 30px); align-items: center; padding-top: 1px; align-content: start; }
.combo.color select { padding-left: 46px; }
.combo.color::before { content: ""; position: absolute; left: 14px; top: 4px; width: 20px; height: 20px; background: #fff; border: 1px solid #888; }
.combo.lw select, .combo.lt select { padding-left: 86px; }
.combo.lw::before, .combo.lt::before { content: ""; position: absolute; left: 11px; top: 13px; width: 74px; height: 2px; background: #ddd; }
.launch { position: absolute; right: 5px; top: 9px; }
.p-view h2, .p-properties h2 { padding-right: 16px; }

/* drawing file tabs */
.files { display: flex; height: 35px; padding-left: 17px; border-bottom: 5px solid #575757; }
.ftab {
  position: relative; display: flex; justify-content: space-between; align-items: center; width: 166px; height: 28px; margin-top: 2px; padding: 6px 24px 0 22px;
  background: linear-gradient(#636363, #505050); color: #a8a8a8;
  clip-path: path("M0 28C10 26 8 2 20 0H148C160 2 158 26 166 28Z");
}
.ftab.on { margin-left: -8px; padding: 6px 23px 0 18px; background: linear-gradient(#8a8a8a, #595959); color: #fff; }
.fadd { width: 27px; height: 20px; margin: 8px 0 0 2px; display: grid; place-items: center; background: #525252; clip-path: path("M0 0H18Q26 2 27 20H8Q1 16 0 0Z"); }

/* drawing area */
.canvas { position: relative; flex: 1; min-height: 500px; background: #212830; display: flex; align-items: flex-end; justify-content: center; }
.paper { position: absolute; inset: 0; }
.vp { position: absolute; left: 2px; top: 4px; font: 12px/20px "Noto Sans CJK KR", sans-serif; }
.tip { position: absolute; left: 720px; top: 155px; width: 117px; height: 28px; padding: 2px 5px; background: #999; border: 1px solid #000; color: #111; }
.note { position: absolute; left: 673px; top: 219px; font: 500 45px/70px "Noto Sans CJK KR", sans-serif; color: #ff1010; white-space: nowrap; }
.ucs { position: absolute; left: 12px; bottom: 2px; }
.vpwin { position: absolute; right: 22px; top: 9px; display: flex; gap: 9px; }
.cube { position: absolute; right: 28px; top: 36px; display: grid; justify-items: center; gap: 17px; }
.wcs { display: flex; align-items: center; justify-content: space-between; width: 48px; height: 18px; padding: 0 4px; border-radius: 4px; background: #84868c; border: 1px solid #9a9ca1; color: #4b5056; font: 11px "Liberation Sans", Arial, sans-serif; }
.navbar { position: absolute; right: 15px; top: 236px; border-radius: 4px; background: #5e6268; }
.edge { position: absolute; right: 0; top: 0; bottom: 0; width: 11px; background: #b9cdea; border-right: 2px solid #e6f2f5; box-shadow: inset -1px 0 #18c6d0; }
.cmd { position: relative; width: 1087px; max-width: 90%; }
.hist { width: max-content; height: 23px; margin: 0 0 6px 74px; padding: 0 3px; background: #2c333b; color: #626a72; font: 18px/23px "DejaVu Sans Mono", monospace; }
.hist + .hist { margin-bottom: 5px; }
.cmdbar { display: flex; align-items: center; height: 32px; margin-bottom: 1px; background: #babcbf; border-radius: 3px; overflow: hidden; }
.grip { display: flex; align-items: center; gap: 9px; width: 68px; height: 32px; padding-left: 4px; background: linear-gradient(#6b6b6b, #333); }
.prompt { margin: 0 1px 0 6px; }
.cmdbar input { flex: 1; height: 32px; padding: 0; border: 0; background: none; color: #111; font: 18px "DejaVu Sans Mono", monospace; }
.up { width: 22px; height: 32px; display: grid; place-items: center; }

/* layout tabs and status bar */
footer { height: 59px; border-top: 1px solid #5c5c5c; }
.layouts { display: flex; height: 25px; padding-left: 12px; }
.ltab { width: 80px; height: 23px; margin-right: 2px; text-align: center; background: linear-gradient(#454545, #646464); color: #b5b5b5; clip-path: path("M0 0H80C74 4 76 20 68 23H14C4 20 8 4 0 0Z"); }
.ltab.on { width: 75px; background: linear-gradient(#5a5a5a, #8c8c8c); color: #fff; font-weight: 700; clip-path: path("M0 0H75C69 4 72 20 64 23H14C4 20 8 4 0 0Z"); }
.ladd { width: 28px; height: 20px; margin: 1px 0 0 4px; display: grid; place-items: center; background: #565656; clip-path: path("M5 0H28Q27 18 20 20H0Q0 6 5 0Z"); }
.status { display: flex; justify-content: flex-end; gap: 1px; height: 33px; }
.cell { display: flex; align-items: center; justify-content: space-between; height: 32px; border: 1px solid #787878; background: #505050; color: #c4c4c4; }
.model { width: 62px; justify-content: center; color: #fff; }
.c2 { width: 81px; padding: 0 5px; }
.c3 { width: 130px; padding: 0 4px 0 5px; }
.c4 { width: 81px; padding: 0 4px; margin-left: -1px; border-left: 0; }
.c5 { width: 132px; padding: 0 4px; }
.c6 { width: 51px; padding: 0 4px 0 8px; }
.c7 { width: 31px; margin-left: -1px; justify-content: center; }
.c8 { width: 31px; justify-content: center; }
.c9 { width: 33px; justify-content: center; }
.c10 { width: 6px; }
.c11 { width: 62px; padding: 0 5px; border-right: 0; }
.blue { color: #3a97ff; }
.scale { color: #fff; }
.glow { filter: drop-shadow(0 0 2px #1673e6); }
```
